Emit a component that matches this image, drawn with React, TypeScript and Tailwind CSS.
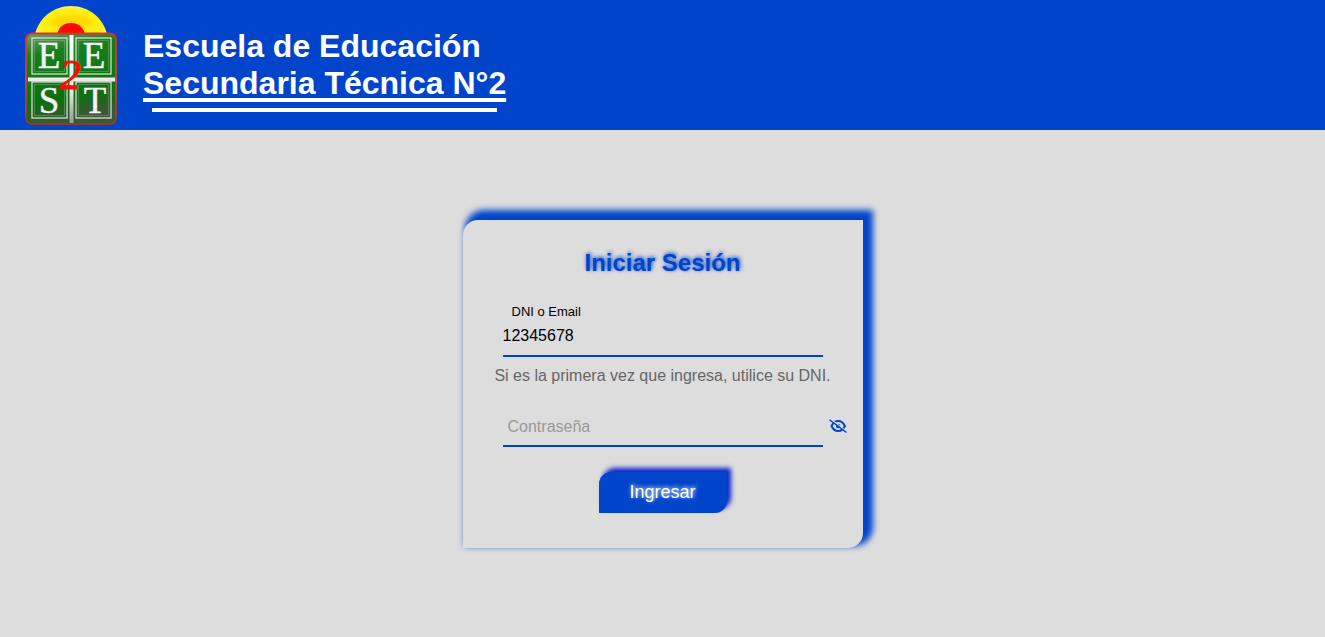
import { useState } from "react";
import { BiSolidHide, BiSolidShow } from "react-icons/bi";

const quadrants = [
  { letter: "E", x: 7, y: 33, tx: 24, ty: 63 },
  { letter: "E", x: 51, y: 33, tx: 69, ty: 63 },
  { letter: "S", x: 7, y: 77, tx: 24, ty: 108 },
  { letter: "T", x: 51, y: 77, tx: 70, ty: 108 },
];

function Logo() {
  return (
    <svg
      viewBox="0 0 92 120"
      className="h-[120px] w-[92px] shrink-0"
      role="img"
      aria-label="EEST 2"
    >
      <defs>
        <radialGradient id="sun" cx="50%" cy="60%" r="60%">
          <stop offset="0.3" stopColor="#ffd800" />
          <stop offset="0.6" stopColor="#ffee10" />
          <stop offset="0.85" stopColor="#ffee22" />
          <stop offset="1" stopColor="#fff5a0" />
        </radialGradient>
        <linearGradient id="tile" x1="0" y1="0" x2="0.2" y2="1">
          <stop offset="0" stopColor="#6f9f6c" />
          <stop offset="0.25" stopColor="#16801c" />
          <stop offset="0.75" stopColor="#0c700d" />
          <stop offset="1" stopColor="#3a5634" />
        </linearGradient>
        <linearGradient id="bar" x1="0" y1="0" x2="0" y2="1">
          <stop offset="0" stopColor="#ffffff" />
          <stop offset="0.65" stopColor="#e6e6e6" />
          <stop offset="1" stopColor="#929b91" />
        </linearGradient>
        <linearGradient id="rim" x1="0" y1="0" x2="0" y2="1">
          <stop offset="0" stopColor="#e0301f" />
          <stop offset="0.5" stopColor="#c04a38" />
          <stop offset="1" stopColor="#8f3b2c" />
        </linearGradient>
      </defs>
      <path d="M10 29C14 13 28 1 46 1s32 12 36 28z" fill="url(#sun)" />
      <path d="M32 29c2-8 8-11 14-11s12 3 14 11z" fill="#f70b05" />
      <rect x="1" y="28.500" width="90" height="90.500" rx="6" fill="url(#tile)" stroke="url(#rim)" strokeWidth="1.800" />
      {quadrants.map((q) => (
        <g key={`${q.x}-${q.y}`}>
          <rect x={q.x} y={q.y} width="35" height="36" fill="none" stroke="#e0eadf" strokeWidth="1.200" />
          <rect x={q.x + 2.5} y={q.y + 2.5} width="30" height="31" fill="none" stroke="#cfe0cd" strokeOpacity="0.35" strokeWidth="0.8" />
          <text
            x={q.tx}
            y={q.ty}
            textAnchor="middle"
            fontSize="37"
            fill="#f3f1f3"
            stroke="#f3f1f3"
            strokeWidth="0.4"
            fontFamily="'Liberation Serif', serif"
          >
            {q.letter}
          </text>
        </g>
      ))}
      <path d="M44.500 30h4v88h-4zM3 72.500h87v4H3z" fill="url(#bar)" />
      <text
        x="45"
        y="84"
        textAnchor="middle"
        fontSize="43"
        fontStyle="italic"
        fontWeight="400"
        fill="#fb0b0b"
        stroke="#fb0b0b"
        strokeWidth="1"
        fontFamily="'Liberation Serif', serif"
      >
        2
      </text>
    </svg>
  );
}

export default function App() {
  const [user, setUser] = useState("12345678");
  const [password, setPassword] = useState("");
  const [visible, setVisible] = useState(false);

  return (
    <div className="flex min-h-screen flex-col bg-[#ddd] font-['Liberation_Sans',Arial,sans-serif]">
      <header className="flex h-[130px] items-center gap-[26px] bg-[#04c] px-[25px]">
        <Logo />
        <div className="flex flex-col items-center gap-1.5 pt-2.5">
          <h1 className="text-[32px] leading-[37px] font-bold text-white">
            Escuela de Educación
            <br />
            <span className="underline decoration-4 underline-offset-4 [text-decoration-skip-ink:none]">
              Secundaria Técnica N°2
            </span>
          </h1>
          <div className="h-1 w-[95%] bg-white" />
        </div>
      </header>

      <main className="flex flex-1 items-center justify-center">
        <form
          className="flex w-full max-w-[400px] flex-col rounded-tl-[15px] rounded-br-[15px] bg-[#ddd] pt-7 pb-[35px] shadow-[6px_-6px_6px_4px_#04c]"
          onSubmit={(e) => e.preventDefault()}
        >
          <h2 className="pt-px text-center text-2xl leading-7 font-bold text-[#04c] [text-shadow:1px_-1px_4px_#04c]">
            Iniciar Sesión
          </h2>

          <div className="mt-[27px] flex flex-col px-10">
            <label htmlFor="user" className="pl-[9px] text-[13px] leading-4 text-black">
              DNI o Email
            </label>
            <input
              id="user"
              type="text"
              value={user}
              onChange={(e) => setUser(e.target.value)}
              className="h-[37px] w-full border-b-2 border-[#04c] bg-transparent pb-0.5 text-base text-black outline-none"
            />
          </div>
          <p className="mt-[7px] text-center text-base text-[#666]">
            Si es la primera vez que ingresa, utilice su DNI.
          </p>

          <div className="mt-[22px] flex items-center gap-1.5 pr-4 pl-10">
            <div className="relative flex-1">
              <input
                id="password"
                type={visible ? "text" : "password"}
                value={password}
                onChange={(e) => setPassword(e.target.value)}
                className="block h-[37px] w-full border-b-2 border-[#04c] bg-transparent text-base text-black outline-none"
              />
              {password === "" && (
                <label htmlFor="password" className="absolute top-[5px] left-[5px] text-base text-[#999]">
                  Contraseña
                </label>
              )}
            </div>
            <button
              type="button"
              aria-pressed={visible}
              aria-label="Mostrar contraseña"
              onClick={() => setVisible(!visible)}
              className="pb-1 text-[#04c]"
            >
              {visible ? (
                <BiSolidShow className="size-[18px]" />
              ) : (
                <svg viewBox="0 0 18 14" className="h-3.5 w-[18px]" fill="none" stroke="currentColor">
                  <path
                    d="M2.500 7C4 3.800 6.300 2 9.200 2s5.300 1.800 6.700 5c-1.400 3.200-3.800 5-6.700 5S4 10.200 2.500 7z"
                    strokeWidth="2"
                  />
                  <circle cx="9.200" cy="7" r="2.200" fill="currentColor" stroke="none" />
                  <path d="M1.500 0L18 12.500" stroke="#ddd" strokeWidth="1.200" />
                  <path d="M.5.700L17.500 13.500" strokeWidth="1.400" />
                </svg>
              )}
            </button>
          </div>

          <button
            type="submit"
            className="mt-[25px] h-[41px] w-32 self-center rounded-tl-[12px] rounded-br-[12px] bg-[#04c] text-lg text-white shadow-[4px_-4px_5px_#0a1fcd] [text-shadow:1px_-1px_4px_#fff]"
          >
            Ingresar
          </button>
        </form>
      </main>
    </div>
  );
}
